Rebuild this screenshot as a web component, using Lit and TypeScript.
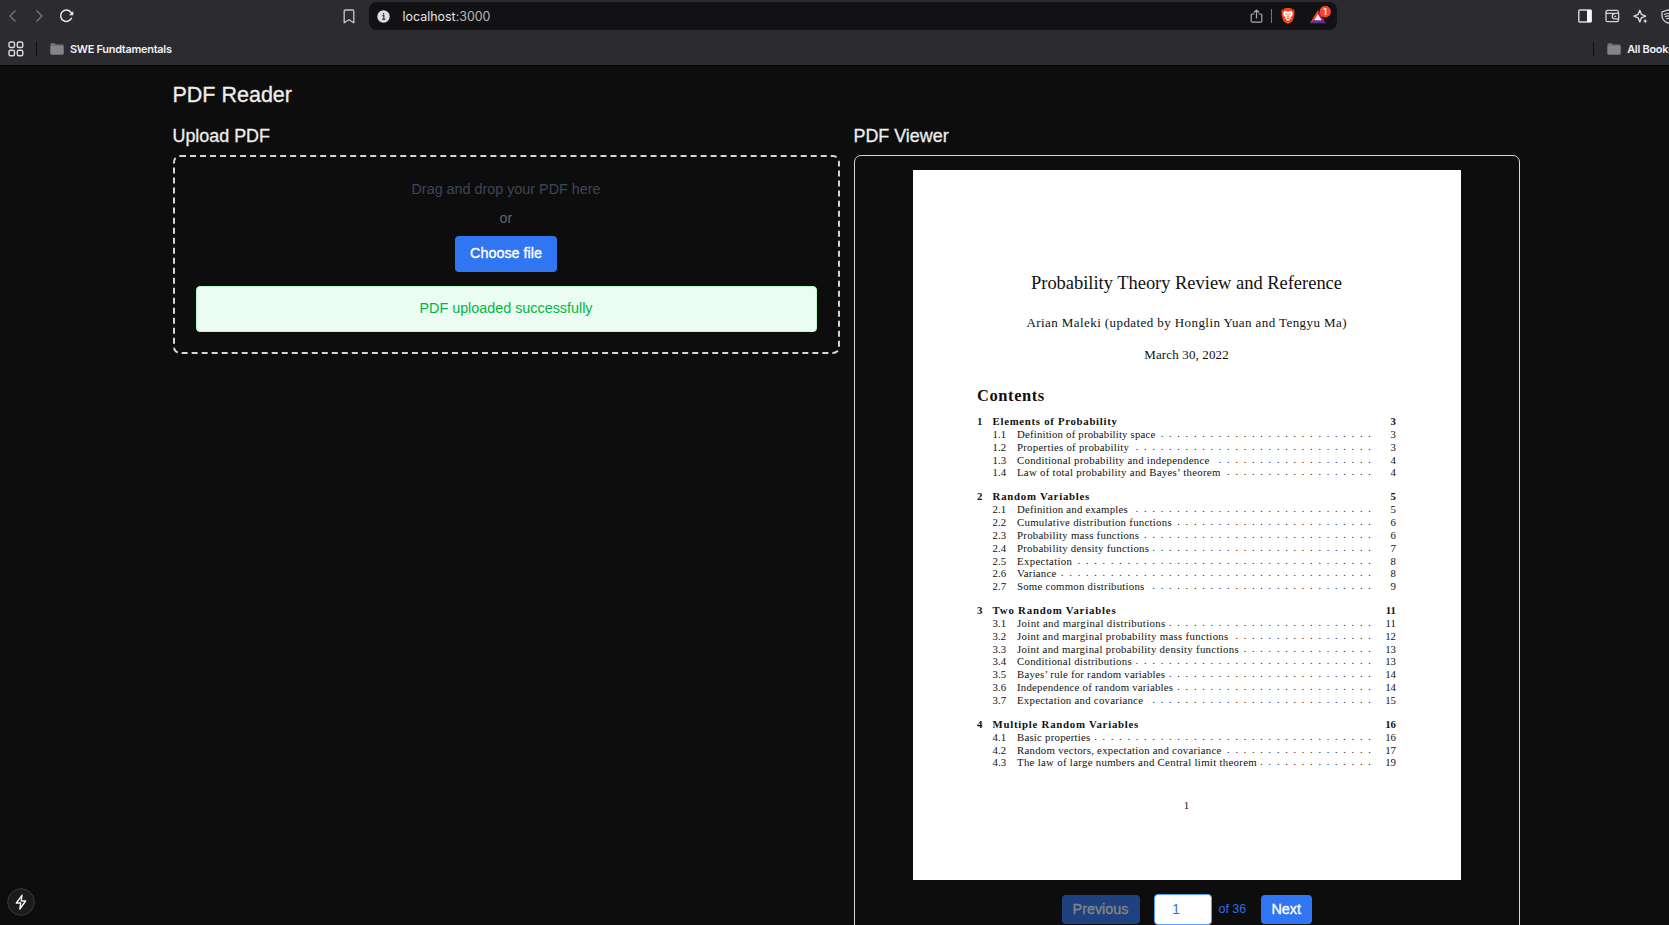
import { LitElement, html, css, svg } from "lit";
import { customElement } from "lit/decorators.js";

type Entry = { title: string; page: string; width: number; dots: number };
type Section = { title: string; page: string; width: number; entries: Entry[] };

const e = (title: string, page: string, width: number, dots: number): Entry => ({ title, page, width, dots });

const SECTIONS: Section[] = [
  {
    title: "Elements of Probability", page: "3", width: 124.3,
    entries: [
      e("Definition of probability space", "3", 138.3, 26),
      e("Properties of probability", "3", 112, 29),
      e("Conditional probability and independence", "4", 192.3, 19),
      e("Law of total probability and Bayes’ theorem", "4", 203.3, 18),
    ],
  },
  {
    title: "Random Variables", page: "5", width: 96.7,
    entries: [
      e("Definition and examples", "5", 110.7, 29),
      e("Cumulative distribution functions", "6", 154.7, 24),
      e("Probability mass functions", "6", 122, 28),
      e("Probability density functions", "7", 132, 27),
      e("Expectation", "8", 55, 36),
      e("Variance", "8", 39.3, 38),
      e("Some common distributions", "9", 127.3, 27),
    ],
  },
  {
    title: "Two Random Variables", page: "11", width: 123,
    entries: [
      e("Joint and marginal distributions", "11", 148.3, 25),
      e("Joint and marginal probability mass functions", "12", 211.3, 17),
      e("Joint and marginal probability density functions", "13", 221.7, 16),
      e("Conditional distributions", "13", 114.7, 29),
      e("Bayes’ rule for random variables", "14", 148, 25),
      e("Independence of random variables", "14", 156, 24),
      e("Expectation and covariance", "15", 126, 27),
    ],
  },
  {
    title: "Multiple Random Variables", page: "16", width: 145.7,
    entries: [
      e("Basic properties", "16", 73.3, 34),
      e("Random vectors, expectation and covariance", "17", 204.3, 18),
      e("The law of large numbers and Central limit theorem", "19", 239.7, 14),
    ],
  },
];

const folder = html`<svg class="folder" width="14" height="12" viewBox="0 0 14 12">
  <path d="M.5 1.2Q.5.3 1.5.3H4.6L6 1.6h6.6q.9 0 .9.9v8q0 1-1 1H1.5q-1 0-1-1z" fill="#737378"/>
  <path d="M.5 3h13v7.5q0 1-1 1H1.5q-1 0-1-1z" fill="#858589"/>
</svg>`;

@customElement("browser-bar")
export class BrowserBar extends LitElement {
  static styles = css`
    :host { display: block; height: 65px; background: #2c2b30; border-bottom: 1px solid #040404;
      font-family: Inter, "Liberation Sans", sans-serif; color: #f2f2f4; overflow: hidden; }
    svg { display: block; flex: none; fill: none; }
    .tools { display: flex; align-items: center; height: 32px; padding-left: 6px; width: 1700px; }
    .forward { margin-left: 13px; }
    .reload { margin-left: 12px; }
    .mark { margin-left: 267.5px; }
    .address { box-sizing: border-box; display: flex; align-items: center; width: 967.5px; height: 28px; margin-left: 13.5px;
      padding: 0 5px 0 7.5px; border-radius: 8px; background: #121214; flex: none; }
    .url { margin-left: 13px; font-size: 12.450px; line-height: 16px; padding-top: 1px; flex: 1; color: #e6e6e8; }
    .port { color: #b9b9bd; }
    .bar { width: 1.5px; height: 14px; background: #77777a; margin: 0 8.5px 0 8px; }
    .ads { margin-left: 13px; }
    .panel { margin-left: 241.5px; }
    .wallet { margin-left: 13px; }
    .spark { margin-left: 12.5px; }
    .vpn { margin-left: 13.5px; }
    .marks { display: flex; align-items: center; height: 34px; padding-left: 8px; width: 1700px; }
    .rule { width: 1px; height: 14px; background: #0d0d0f; margin-left: 12px; flex: none; }
    .folder { margin-left: 13px; }
    .label { margin-left: 6px; font-size: 10.900px; font-weight: 600; line-height: 14px; letter-spacing: -.25px; white-space: nowrap; width: 102px; }
    .right { margin-left: 1421.5px; }
    .badge { font: 600 8.5px Inter, sans-serif; fill: #fff; }
  `;

  render() {
    return html`
      <div class="tools">
        <svg width="14" height="14" viewBox="0 0 14 14"><path d="M9.500 1.500 4 7l5.500 5.500" stroke="#77767b" stroke-width="1.300"/></svg>
        <svg class="forward" width="14" height="14" viewBox="0 0 14 14"><path d="M3.500 1.500 9 7l-5.500 5.500" stroke="#77767b" stroke-width="1.300"/></svg>
        <svg class="reload" width="15" height="14" viewBox="0 0 15 14">
          <path d="M12.700 8.700A5.700 5.700 0 1 1 11.600 2.900L13 5" stroke="#ececee" stroke-width="1.500"/>
          <path d="M14.300 2v4.300H10z" fill="#ececee"/></svg>
        <svg class="mark" width="14" height="15" viewBox="0 0 14 15"><path d="M2.200 2.200q0-1.200 1.200-1.200h7.200q1.200 0 1.200 1.200V13.800L7 10.700l-4.800 3.100z" stroke="#c9c9cc" stroke-width="1.300" stroke-linejoin="round"/></svg>
        <div class="address">
          <svg width="13" height="13" viewBox="0 0 13 13"><circle cx="6.500" cy="6.500" r="6.200" fill="#dedde2"/><path d="M5.300 5.700h1.500v3.600M5.200 9.300h3M6.500 3v1.500" stroke="#343338" stroke-width="1.200"/></svg>
          <span class="url">localhost<span class="port">:3000</span></span>
          <svg width="13" height="14" viewBox="0 0 13 14"><path d="M4.300 5H2.200q-1 0-1 1v6q0 1.200 1.200 1.200h8.200q1.200 0 1.200-1.200V6q0-1-1-1H8.700M6.500 9.500V1.200M3.900 3.500 6.500 1l2.600 2.500" stroke="#a9a9ac" stroke-width="1.200"/></svg>
          <div class="bar"></div>
          <svg width="14" height="16" viewBox="0 0 14 16">
            <path d="M4.200 0h5.600l1.400 1.400 1.400-.1 1.200 2.200-.6 1.500.3 1.700-1.800 6.100Q11 14 7 16 3 14 2.300 12.800L.5 6.700.8 5 .2 3.500l1.200-2.200 1.400.1z" fill="#f8431c"/>
            <path d="M3.800 3 7 3.500 10.200 3l1.700 2.300-.7 2.200-1.800 1.900.3 1.400L7 12.900l-2.700-2.100.3-1.400-1.800-1.900-.7-2.200z" fill="#fff"/>
            <path d="M4 5.700l2 .6M10 5.700l-2 .6M7 6v3.300M5.600 8.300 7 9.400l1.400-1.100M5.400 11 7 10.200l1.600.8" stroke="#f8431c" stroke-width=".8"/>
          </svg>
          <svg class="ads" width="24" height="20" viewBox="0 0 24 20">
            <path d="M10 4 2 17.300 10 12z" fill="#fa4a1c"/>
            <path d="M10 4 18 17.300 10 12z" fill="#a7245c"/>
            <path d="M2 17.300h16L10 12z" fill="#5d2f94"/>
            <path d="M10 8.300 13.600 14.300H6.400z" fill="#fff"/>
            <circle cx="17.200" cy="5" r="5" fill="#fb452a"/>
            <circle cx="17.200" cy="5.800" r="5.700" fill="#fb452a"/>
            <text class="badge" x="17" y="8.500" text-anchor="middle">1</text>
          </svg>
        </div>
        <svg class="panel" width="14" height="14" viewBox="0 0 14 14"><rect x=".8" y="1" width="12.400" height="12" rx="1" stroke="#d9d9dc" stroke-width="1.400"/><path d="M9 1h4.500v12H9z" fill="#fff"/></svg>
        <svg class="wallet" width="15" height="14" viewBox="0 0 15 14"><path d="M13.200 4.200V2.500q0-1.200-1.200-1.200H2.500Q1 1.300 1 2.700v8.500q0 1.500 1.500 1.500H12q1.300 0 1.300-1.300v-1.200M1 3.200q.3 1.200 1.500 1.200h11.200v5.500H9.600Q7.200 9.600 7.200 7.300t2.400-2.700M9.300 7.300h1.800" stroke="#d2d2d5" stroke-width="1.300"/></svg>
        <svg class="spark" width="15" height="15" viewBox="0 0 15 15"><path d="M6.800 1.300 8.400 5.400l4.200 1.700-4.200 1.700-1.600 4.100-1.700-4.100L1 7.100l4.100-1.700z" stroke="#d9d9dc" stroke-width="1.400" stroke-linejoin="round"/><path d="m12.200 9.800.7 1.600 1.600.7-1.600.7-.7 1.600-.7-1.600-1.600-.7 1.600-.7z" fill="#eee"/></svg>
        <svg class="vpn" width="14" height="15" viewBox="0 0 14 15"><path d="M7 .9 13 3v3.700q0 4.800-6 7.400-6-2.600-6-7.400V3z" stroke="#d0d0d3" stroke-width="1.300"/><path d="M3 5.800q4-2.600 8 0M4 7.900q3-1.900 6 0M5.500 9.900q1.500-1 3 0" stroke="#d0d0d3" stroke-width="1.200"/></svg>
      </div>
      <div class="marks">
        <svg width="16" height="16" viewBox="0 0 16 16">${[[1, 1], [9.3, 1], [1, 9.3], [9.3, 9.3]].map(
          ([x, y]) => svg`<rect x=${x} y=${y} width="5.500" height="5.500" rx="1.500" stroke="#dadadd" stroke-width="1.400"/>`)}</svg>
        <div class="rule"></div>
        ${folder}<span class="label">SWE Fundtamentals</span>
        <div class="rule right"></div>
        ${folder}<span class="label">All Bookmarks</span>
      </div>
    `;
  }
}

@customElement("pdf-page")
export class PdfPage extends LitElement {
  static styles = css`
    :host { box-sizing: border-box; display: block; width: 548.5px; height: 710px; background: #fff; color: #111;
      font-family: "Liberation Serif", serif; padding: 102px 65px 0 64.500px; }
    .fit { display: inline-block; white-space: nowrap; justify-self: start; }
    .head { display: flex; flex-direction: column; align-items: center; }
    .title { font-size: 18.5px; line-height: 22px; }
    .author { font-size: 13px; line-height: 16px; margin-top: 21px; }
    .date { font-size: 13px; line-height: 16px; margin-top: 15.500px; }
    .contents { font-size: 16.500px; line-height: 20px; font-weight: 700; margin-top: 23.500px; }
    .toc { display: flex; flex-direction: column; gap: 10.500px; margin-top: 8.800px; font-size: 10.800px; line-height: 12.920px; }
    .section { display: grid; grid-template-columns: 15.600px 1fr auto; font-weight: 700; }
    .entry { display: grid; grid-template-columns: 24.400px auto 1fr 24.500px; padding-left: 15.600px; }
    .page { text-align: right; }
    .dots { text-align: right; letter-spacing: 5.800px; font-size: 10px; white-space: nowrap; width: 0; justify-self: end; display: flex; justify-content: flex-end; margin-right: -5px; }
    .folio { text-align: center; font-size: 10.800px; line-height: 13px; margin-top: 30px; }
  `;

  // Tracks each line out to its typeset width.
  firstUpdated() {
    this.renderRoot.querySelectorAll<HTMLElement>(".fit").forEach((el) => {
      const n = (el.textContent ?? "").length;
      const gap = (Number(el.dataset.width) - el.getBoundingClientRect().width) / (n - 1);
      el.style.letterSpacing = `${gap}px`;
      el.style.marginRight = `${-gap}px`;
    });
  }

  render() {
    return html`
      <div class="head">
        <span class="fit title" data-width="311">Probability Theory Review and Reference</span>
        <span class="fit author" data-width="320">Arian Maleki (updated by Honglin Yuan and Tengyu Ma)</span>
        <span class="fit date" data-width="84.5">March 30, 2022</span>
      </div>
      <div class="contents"><span class="fit" data-width="67.3">Contents</span></div>
      <div class="toc">
        ${SECTIONS.map((s, i) => html`<div>
          <div class="section"><span>${i + 1}</span><span class="fit" data-width=${s.width}>${s.title}</span><span>${s.page}</span></div>
          ${s.entries.map((t, j) => html`<div class="entry"><span>${i + 1}.${j + 1}</span><span class="fit" data-width=${t.width}>${t.title}</span><span class="dots">${".".repeat(t.dots)}</span><span class="page">${t.page}</span></div>`)}
        </div>`)}
      </div>
      <div class="folio">1</div>
    `;
  }
}

@customElement("app-root")
export class AppRoot extends LitElement {
  static styles = css`
    :host { display: block; position: relative; height: 925px; overflow: hidden; background: #0d0d0d; color: #ededed;
      font-family: "Liberation Sans", Arial, sans-serif; font-size: 14.350px; }
    main { width: 1347.500px; margin-left: 172.500px; padding-top: 14.500px; }
    h1, h2 { margin: 0; font-weight: 400; -webkit-text-stroke: .3px #ededed; }
    h1 { font-size: 21.500px; line-height: 28px; }
    h2 { font-size: 17.900px; line-height: 25px; margin-bottom: 6px; }
    .columns { display: grid; grid-template-columns: 1fr 1fr; gap: 14px; margin-top: 15.500px; align-items: start; }
    .drop { box-sizing: border-box; height: 199px; border: 2px dashed #d1d5dc; border-radius: 7px; padding: 22px 21px 20px;
      display: flex; flex-direction: column; align-items: center; line-height: 21px; }
    .hint { color: #3d4654; }
    .or { color: #5d6574; margin-top: 8px; }
    .btn { box-sizing: border-box; background: #3076f3; color: #fff; border-radius: 4px; display: flex; align-items: center; justify-content: center;
      -webkit-text-stroke: .35px currentColor; }
    .choose { width: 102px; height: 36.500px; margin-top: 6.500px; }
    .done { box-sizing: border-box; width: 621px; height: 46px; margin-top: 13.500px; border: 1px solid #b9f8cf; border-radius: 4px;
      background: #ebfcf3; color: #00b843; display: flex; align-items: center; justify-content: center; padding-bottom: 1px; }
    .viewer { box-sizing: border-box; height: 790px; border: 1px solid #d1d5dc; border-radius: 7px; padding-top: 14px;
      display: flex; flex-direction: column; align-items: center; }
    .pager { display: flex; align-items: center; height: 31px; margin-top: 13.500px; }
    .prev { width: 78px; height: 29px; background: #1f4180; color: #858585; }
    .num { box-sizing: border-box; width: 58px; height: 31px; border: 1px solid #51a2ff; border-radius: 4px; margin-left: 14.500px;
      background: #fff; color: #2b6ff0; padding-left: 17px; display: flex; align-items: center; }
    .of { color: #2f6fe4; font-size: 12.400px; margin-left: 6.500px; width: 28px; white-space: nowrap; }
    .next { width: 51.500px; height: 29px; margin-left: 14px; }
    .bolt { position: absolute; left: 7px; top: 888px; }
  `;

  render() {
    return html`
      <browser-bar></browser-bar>
      <main>
        <h1>PDF Reader</h1>
        <div class="columns">
          <section>
            <h2>Upload PDF</h2>
            <div class="drop">
              <span class="hint">Drag and drop your PDF here</span>
              <span class="or">or</span>
              <div class="btn choose">Choose file</div>
              <div class="done">PDF uploaded successfully</div>
            </div>
          </section>
          <section>
            <h2>PDF Viewer</h2>
            <div class="viewer">
              <pdf-page></pdf-page>
              <div class="pager">
                <div class="btn prev">Previous</div>
                <div class="num">1</div>
                <span class="of">of 36</span>
                <div class="btn next">Next</div>
              </div>
            </div>
          </section>
        </div>
      </main>
      <svg class="bolt" width="28" height="28" viewBox="0 0 28 28">
        <circle cx="14" cy="14" r="13.300" fill="#1b1b1b" stroke="#3a3a3a"/>
        <path d="M15 7.300 9.300 15h4.400l-.9 6L18.600 13h-4.400z" fill="none" stroke="#f5f5f5" stroke-width="1.400" stroke-linejoin="round"/>
      </svg>
    `;
  }
}
